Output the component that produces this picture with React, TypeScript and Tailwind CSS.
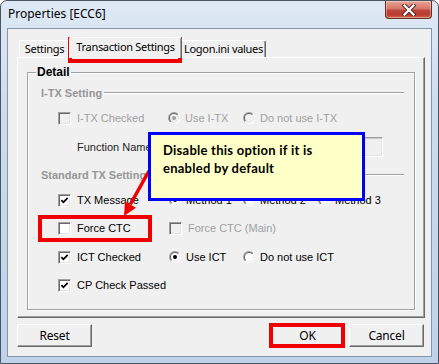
import React from "react";

const ui = "font-['Noto_Sans',sans-serif]";

function Check({ checked = false, disabled = false }: { checked?: boolean; disabled?: boolean }) {
  return (
    <span
      className={`box-border flex h-[13px] w-[13px] shrink-0 items-center justify-center border border-t-[#a0a0a0] border-l-[#a0a0a0] border-r-white border-b-white shadow-[inset_1px_1px_0_#696969,inset_-1px_-1px_0_#e3e3e3] ${
        disabled ? "bg-[#f0f0f0]" : "bg-white"
      }`}
    >
      {checked && (
        <svg width="9" height="9" viewBox="0 0 9 9">
          <path d="M1.4 4.1 L3.4 6.3 L7.7 1.9" fill="none" stroke={disabled ? "#a0a0a0" : "#000"} strokeWidth="1.8" />
        </svg>
      )}
    </span>
  );
}

function Radio({ checked = false, disabled = false }: { checked?: boolean; disabled?: boolean }) {
  return (
    <svg width="12" height="12" viewBox="0 0 12 12" className="shrink-0">
      <defs>
        <linearGradient id="rgo" x1="0" y1="0" x2="1" y2="1">
          <stop offset="0.5" stopColor="#a0a0a0" />
          <stop offset="0.5" stopColor="#ffffff" />
        </linearGradient>
        <linearGradient id="rgi" x1="0" y1="0" x2="1" y2="1">
          <stop offset="0.5" stopColor="#696969" />
          <stop offset="0.5" stopColor="#e3e3e3" />
        </linearGradient>
      </defs>
      <circle cx="6" cy="6" r="6" fill="url(#rgo)" />
      <circle cx="6" cy="6" r="5" fill="url(#rgi)" />
      <circle cx="6" cy="6" r="4" fill={disabled ? "#f0f0f0" : "#ffffff"} />
      {checked && <circle cx="6" cy="6" r="2" fill={disabled ? "#a0a0a0" : "#000"} />}
    </svg>
  );
}

function CheckItem({ label, checked, disabled }: { label: string; checked?: boolean; disabled?: boolean }) {
  return (
    <div className="flex items-center gap-[6px]">
      <Check checked={checked} disabled={disabled} />
      <span className={`whitespace-nowrap ${disabled ? "text-[#a0a0a0]" : "text-black"}`}>{label}</span>
    </div>
  );
}

function RadioItem({ label, checked, disabled }: { label: string; checked?: boolean; disabled?: boolean }) {
  return (
    <div className="flex items-center gap-[5px]">
      <Radio checked={checked} disabled={disabled} />
      <span className={`whitespace-nowrap ${disabled ? "text-[#a0a0a0]" : "text-black"}`}>{label}</span>
    </div>
  );
}

function SectionLabel({ text, className = "" }: { text: string; className?: string }) {
  return (
    <div className={`flex h-[20px] items-center pl-[13px] pr-[10px] ${className}`}>
      <span className="whitespace-nowrap text-[11px] font-bold text-[#969696]">{text}</span>
      <div className="ml-[2px] box-border h-[2px] flex-1 border-t border-b border-t-[#a0a0a0] border-b-white" />
    </div>
  );
}

function Button({ label, className = "" }: { label: string; className?: string }) {
  return (
    <div
      className={`${ui} box-border flex h-[23px] w-[75px] items-center justify-center border border-t-white border-l-white border-r-[#696969] border-b-[#696969] bg-[#f0f0f0] text-[12px] tracking-[-0.2px] shadow-[inset_-1px_-1px_0_#a0a0a0] ${className}`}
    >
      {label}
    </div>
  );
}

function CloseButton() {
  return (
    <div className="box-border flex h-[18px] w-[47px] items-center justify-center rounded-b-[4px] border border-t-0 border-[#6b2a22] bg-[linear-gradient(180deg,#e7a497_0%,#d5776a_45%,#c0453a_55%,#b93b2d_80%,#d0674f_100%)] shadow-[inset_0_0_0_1px_rgba(255,255,255,0.35)]">
      <svg width="16" height="12" viewBox="0 0 16 12">
        <path d="M3.5 1.5 L12.5 10.5 M12.5 1.5 L3.5 10.5" stroke="#4a1d18" strokeWidth="4" strokeLinecap="square" />
        <path d="M3.5 1.5 L12.5 10.5 M12.5 1.5 L3.5 10.5" stroke="#ffffff" strokeWidth="2.3" strokeLinecap="square" />
      </svg>
    </div>
  );
}

export default function App() {
  return (
    <div className="relative box-border flex h-[364px] w-[439px] flex-col overflow-hidden rounded-t-[7px] border border-[#4a5564] bg-[linear-gradient(180deg,#dfe9f5_0%,#cddcee_30%,#bfd2e9_100%)] font-['Liberation_Sans',Arial,sans-serif] text-[11px] text-black">
      {/* title bar */}
      <div className="flex h-[27px] shrink-0 items-start justify-between pl-[7px] pr-[6px]">
        <span className={`${ui} mt-[5px] text-[12px] leading-[16px]`}>Properties [ECC6]</span>
        <CloseButton />
      </div>

      {/* client area */}
      <div className="mx-[6px] box-border flex h-[329px] shrink-0 flex-col border border-[#8596ab] bg-[#f0f0f0]">
        {/* tab strip */}
        <div className={`${ui} mt-[8px] flex h-[20px] items-end pl-[11px] text-[11px] tracking-[-0.3px]`}>
          <div className="box-border flex h-[17px] w-[50px] items-center justify-center rounded-tl-[2px] border-t border-l border-t-white border-l-white">
            Settings
          </div>
          <div className="relative z-10 -mb-[1px] box-border flex h-[21px] w-[113px] items-center justify-center rounded-t-[2px] border-t border-l border-r border-t-white border-l-white border-r-[#696969] bg-[#f0f0f0] pb-[2px] shadow-[inset_-1px_0_0_#a0a0a0]">
            Transaction Settings
          </div>
          <div className="box-border flex h-[17px] w-[84px] items-center justify-center rounded-tr-[2px] border-t border-r border-t-white border-r-[#696969] shadow-[inset_-1px_0_0_#a0a0a0]">
            Logon.ini values
          </div>
        </div>

        {/* tab panel */}
        <div className="ml-[9px] box-border h-[261px] w-[408px] border border-t-white border-l-white border-r-[#696969] border-b-[#696969] shadow-[inset_-1px_-1px_0_#a0a0a0]">
          {/* Detail group */}
          <div className="relative ml-[9px] mt-[14px] box-border h-[238px] w-[388px] border border-[#a0a0a0] pt-[10px] shadow-[inset_1px_1px_0_#ffffff,1px_1px_0_#ffffff]">
            <span className="absolute -top-[8px] left-[8px] bg-[#f0f0f0] px-[1px] text-[12px] font-bold leading-[14px]">Detail</span>

            <SectionLabel text="I-TX Setting" />

            <div className="mt-[5px] flex h-[20px] items-center pl-[30px]">
              <div className="w-[110px]">
                <CheckItem label="I-TX Checked" disabled />
              </div>
              <div className="w-[75px]">
                <RadioItem label="Use I-TX" checked disabled />
              </div>
              <RadioItem label="Do not use I-TX" disabled />
            </div>

            <div className="mt-[9px] flex h-[20px] items-center pl-[49px]">
              <span className="w-[91px] whitespace-nowrap text-[#1e1e1e]">Function Name</span>
              <div className="box-border h-[20px] w-[215px] border border-t-[#a0a0a0] border-l-[#a0a0a0] border-r-white border-b-white bg-[#f0f0f0] shadow-[inset_1px_1px_0_#c8c8c8,inset_-1px_-1px_0_#e3e3e3]" />
            </div>

            <SectionLabel text="Standard TX Setting" className="mt-[8px]" />

            <div className="mt-[5px] flex h-[20px] items-center pl-[30px]">
              <div className="w-[111px]">
                <CheckItem label="TX Message" checked />
              </div>
              <div className="w-[74px]">
                <RadioItem label="Method 1" checked />
              </div>
              <div className="w-[75px]">
                <RadioItem label="Method 2" />
              </div>
              <RadioItem label="Method 3" />
            </div>

            <div className="mt-[8px] flex h-[20px] items-center pl-[30px]">
              <div className="w-[111px]">
                <CheckItem label="Force CTC" />
              </div>
              <CheckItem label="Force CTC (Main)" disabled />
            </div>

            <div className="mt-[9px] flex h-[20px] items-center pl-[30px]">
              <div className="w-[111px]">
                <CheckItem label="ICT Checked" checked />
              </div>
              <div className="w-[74px]">
                <RadioItem label="Use ICT" checked />
              </div>
              <RadioItem label="Do not use ICT" />
            </div>

            <div className="mt-[8px] flex h-[20px] items-center pl-[30px]">
              <CheckItem label="CP Check Passed" checked />
            </div>
          </div>
        </div>

        {/* buttons */}
        <div className="mt-[6px] flex h-[23px] items-center pl-[9px] pr-[7px]">
          <Button label="Reset" />
          <Button label="OK" className="ml-auto" />
          <Button label="Cancel" className="ml-[4px]" />
        </div>
      </div>

      {/* annotations */}
      <svg className="absolute left-[109px] top-[159px]" width="50" height="65" viewBox="0 0 50 65">
        <line x1="39" y1="11" x2="20.5" y2="44" stroke="#f00000" strokeWidth="3.5" />
        <polygon points="14,56 26,47.8 15,41.5" fill="#f00000" />
      </svg>

      <div className="absolute left-[147px] top-[131px] box-border h-[69px] w-[217px] border-[3px] border-[#0000ff] bg-[#ffffc8] pl-[12px] pt-[6px] font-['Lato',sans-serif] text-[13px] font-bold leading-[18px] tracking-[0.25px] text-black">
        Disable this option if it is
        <br />
        enabled by default
      </div>

      <div className="absolute left-[67px] top-[36px] box-border h-[26px] w-[114px] border-[4px] border-[#f00000]" />
      <div className="absolute left-[37px] top-[214px] box-border h-[27px] w-[114px] border-[4px] border-[#f00000]" />
      <div className="absolute left-[268px] top-[322px] box-border h-[25px] w-[76px] border-[4px] border-[#f00000]" />
    </div>
  );
}
